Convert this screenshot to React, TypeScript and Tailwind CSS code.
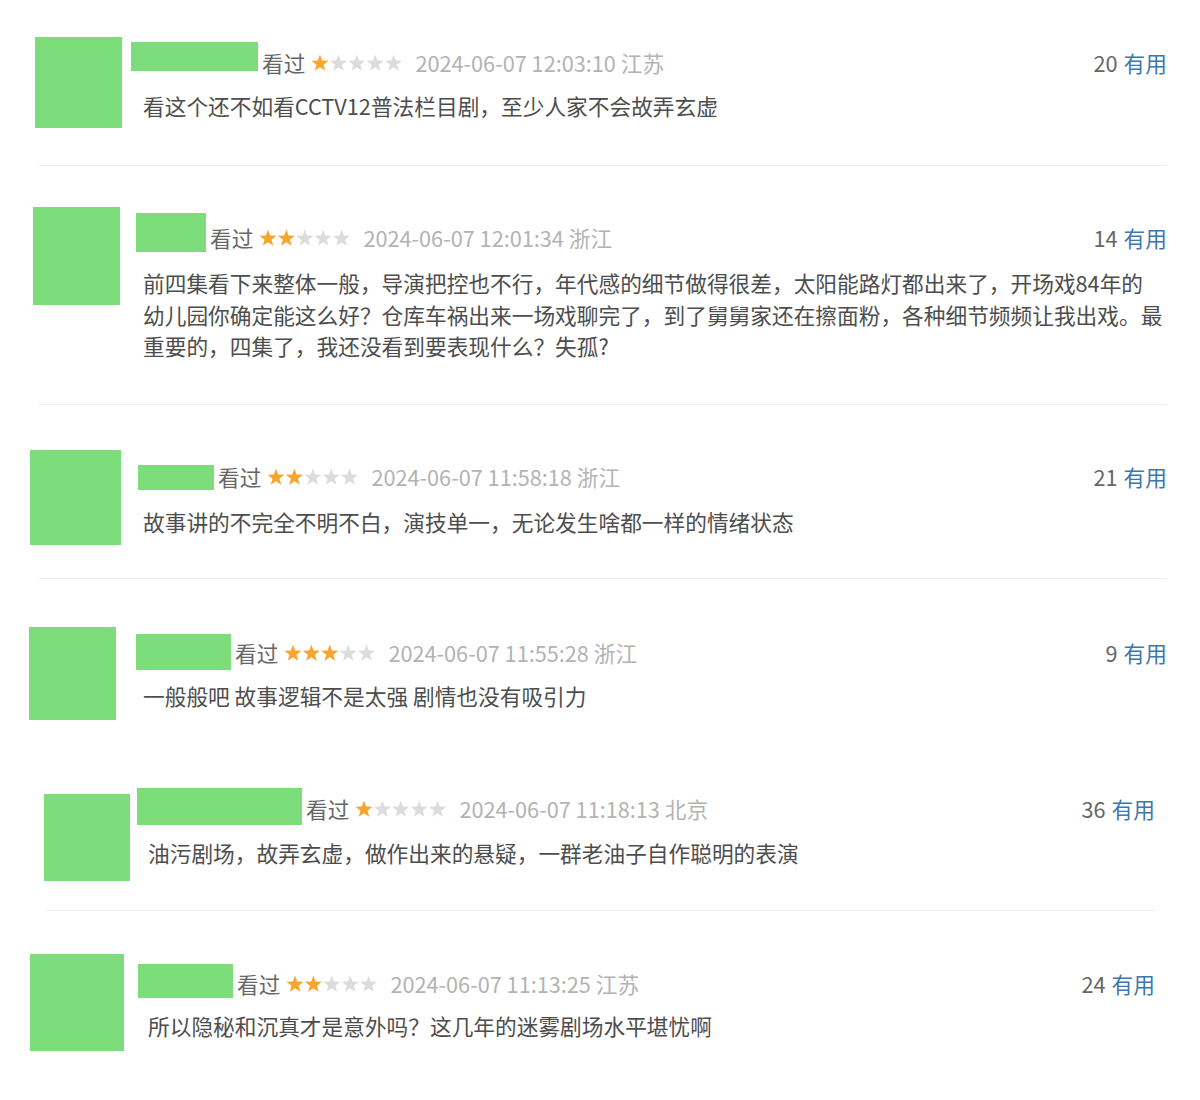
type Row = {
  key: string;
  row: string;
  avatar: string;
  main: string;
  name: string;
  text: string;
  content: string;
  divider: string | null;
  stars: number;
  date: string;
  votes: string;
  lines: string[];
};

const rows: Row[] = [
  {
    key: "r1",
    row: "h-[165px]",
    avatar: "ml-[35px] mt-[37px] w-[87px] h-[91px]",
    main: "ml-[9px] mt-[42px] mr-[33px]",
    name: "w-[127px] h-[29px]",
    text: "mt-[6px]",
    content: "mt-[12px] pl-[12px]",
    divider: "ml-[39px] mr-[33px]",
    stars: 1,
    date: "2024-06-07 12:03:10 江苏",
    votes: "20",
    lines: ["看这个还不如看CCTV12普法栏目剧，至少人家不会故弄玄虚"],
  },
  {
    key: "r2",
    row: "h-[238px]",
    avatar: "ml-[33px] mt-[41px] w-[87px] h-[98px]",
    main: "ml-[16px] mt-[47px] mr-[33px]",
    name: "w-[70px] h-[39px]",
    text: "mt-[10px]",
    content: "mt-[14px] pl-[7px]",
    divider: "ml-[39px] mr-[33px]",
    stars: 2,
    date: "2024-06-07 12:01:34 浙江",
    votes: "14",
    lines: [
      "前四集看下来整体一般，导演把控也不行，年代感的细节做得很差，太阳能路灯都出来了，开场戏84年的",
      "幼儿园你确定能这么好？仓库车祸出来一场戏聊完了，到了舅舅家还在擦面粉，各种细节频频让我出戏。最",
      "重要的，四集了，我还没看到要表现什么？失孤?",
    ],
  },
  {
    key: "r3",
    row: "h-[173px]",
    avatar: "ml-[30px] mt-[45px] w-[91px] h-[95px]",
    main: "ml-[17px] mt-[57px] mr-[33px]",
    name: "w-[76px] h-[25px] mt-[3px]",
    text: "mt-0",
    content: "mt-[14px] pl-[5px]",
    divider: "ml-[39px] mr-[33px]",
    stars: 2,
    date: "2024-06-07 11:58:18 浙江",
    votes: "21",
    lines: ["故事讲的不完全不明不白，演技单一，无论发生啥都一样的情绪状态"],
  },
  {
    key: "r4",
    row: "h-[181px]",
    avatar: "ml-[29px] mt-[48px] w-[87px] h-[93px]",
    main: "ml-[20px] mt-[55px] mr-[33px]",
    name: "w-[95px] h-[36px]",
    text: "mt-[4px]",
    content: "mt-[10px] pl-[7px]",
    divider: null,
    stars: 3,
    date: "2024-06-07 11:55:28 浙江",
    votes: "9",
    lines: ["一般般吧 故事逻辑不是太强 剧情也没有吸引力"],
  },
  {
    key: "r5",
    row: "h-[150px]",
    avatar: "ml-[44px] mt-[34px] w-[86px] h-[87px]",
    main: "ml-[7px] mt-[28px] mr-[45px]",
    name: "w-[165px] h-[37px]",
    text: "mt-[6px]",
    content: "mt-[12px] pl-[11px]",
    divider: "ml-[46px] mr-[45px]",
    stars: 1,
    date: "2024-06-07 11:18:13 北京",
    votes: "36",
    lines: ["油污剧场，故弄玄虚，做作出来的悬疑，一群老油子自作聪明的表演"],
  },
  {
    key: "r6",
    row: "h-[189px]",
    avatar: "ml-[30px] mt-[43px] w-[94px] h-[97px]",
    main: "ml-[14px] mt-[53px] mr-[45px]",
    name: "w-[95px] h-[34px]",
    text: "mt-[5px]",
    content: "mt-[11px] pl-[10px]",
    divider: null,
    stars: 2,
    date: "2024-06-07 11:13:25 江苏",
    votes: "24",
    lines: ["所以隐秘和沉真才是意外吗？这几年的迷雾剧场水平堪忧啊"],
  },
];

const STAR = "9,0.5 11.17,6.51 17.56,6.72 12.52,10.64 14.29,16.78 9,13.2 3.71,16.78 5.48,10.64 0.44,6.72 6.83,6.51";

function Stars({ count }: { count: number }) {
  return (
    <svg width="92" height="18" viewBox="0 0 92 18" className="ml-[6px] shrink-0">
      {[0, 1, 2, 3, 4].map((i) => (
        <polygon
          key={i}
          points={STAR}
          transform={`translate(${i * 18.4} 0)`}
          fill={i < count ? "#f7a531" : "#dcdcdc"}
        />
      ))}
    </svg>
  );
}

function Comment({ r }: { r: Row }) {
  return (
    <>
      <div className={`flex items-start ${r.row}`}>
        <div className={`shrink-0 bg-[#7ddd7a] ${r.avatar}`} />
        <div className={`flex-1 min-w-0 ${r.main}`}>
          <div className="flex items-start">
            <div className={`shrink-0 bg-[#7ddd7a] ${r.name}`} />
            <div className={`flex items-center h-[30px] ${r.text}`}>
              <span className="ml-[4px] text-[#666]">看过</span>
              <Stars count={r.stars} />
              <span className="ml-[12px] text-[#b3b3b3] whitespace-nowrap">{r.date}</span>
            </div>
            <div className={`ml-auto flex items-center h-[30px] whitespace-nowrap ${r.text}`}>
              <span className="text-[#666]">{r.votes}</span>
              <span className="ml-[6px] text-[#3d77ad]">有用</span>
            </div>
          </div>
          <div className={`text-[#4d4d4d] leading-[31.5px] ${r.content}`}>
            {r.lines.map((l, i) => (
              <div key={i} className="whitespace-nowrap">
                {l}
              </div>
            ))}
          </div>
        </div>
      </div>
      {r.divider ? <div className={`h-px bg-[#ececec] ${r.divider}`} /> : null}
    </>
  );
}

export default function App() {
  return (
    <div className="w-[1200px] h-[1100px] overflow-hidden bg-white font-['Noto_Sans_CJK_SC',sans-serif] text-[21.7px] leading-[30px]">
      {rows.map((r) => (
        <Comment key={r.key} r={r} />
      ))}
    </div>
  );
}
